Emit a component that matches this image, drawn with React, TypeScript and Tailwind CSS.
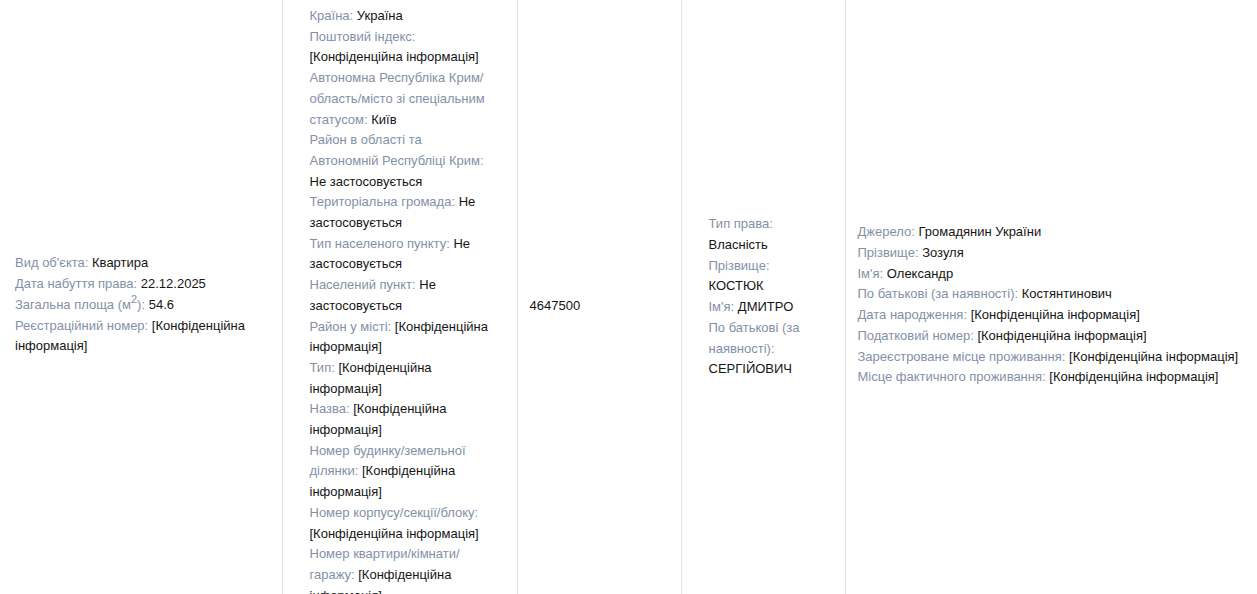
import React from 'react'

type Field = { label: React.ReactNode; value: string }

const objectFields: Field[] = [
  { label: "Вид об'єкта", value: 'Квартира' },
  { label: 'Дата набуття права', value: '22.12.2025' },
  {
    label: (
      <>
        Загальна площа (м<span className="relative -top-[6px] text-[11px] leading-none">2</span>)
      </>
    ),
    value: '54.6',
  },
  { label: 'Реєстраційний номер', value: '[Конфіденційна інформація]' },
]

const addressFields: Field[] = [
  { label: 'Країна', value: 'Україна' },
  { label: 'Поштовий індекс', value: '[Конфіденційна інформація]' },
  { label: 'Автономна Республіка Крим/ область/місто зі спеціальним статусом', value: 'Київ' },
  { label: 'Район в області та Автономній Республіці Крим', value: 'Не застосовується' },
  { label: 'Територіальна громада', value: 'Не застосовується' },
  { label: 'Тип населеного пункту', value: 'Не застосовується' },
  { label: 'Населений пункт', value: 'Не застосовується' },
  { label: 'Район у місті', value: '[Конфіденційна інформація]' },
  { label: 'Тип', value: '[Конфіденційна інформація]' },
  { label: 'Назва', value: '[Конфіденційна інформація]' },
  { label: 'Номер будинку/земельної ділянки', value: '[Конфіденційна інформація]' },
  { label: 'Номер корпусу/секції/блоку', value: '[Конфіденційна інформація]' },
  { label: 'Номер квартири/кімнати/ гаражу', value: '[Конфіденційна інформація]' },
]

const rightFields: Field[] = [
  { label: 'Тип права', value: 'Власність' },
  { label: 'Прізвище', value: 'КОСТЮК' },
  { label: "Ім'я", value: 'ДМИТРО' },
  { label: 'По батькові (за наявності)', value: 'СЕРГІЙОВИЧ' },
]

const personFields: Field[] = [
  { label: 'Джерело', value: 'Громадянин України' },
  { label: 'Прізвище', value: 'Зозуля' },
  { label: "Ім'я", value: 'Олександр' },
  { label: 'По батькові (за наявності)', value: 'Костянтинович' },
  { label: 'Дата народження', value: '[Конфіденційна інформація]' },
  { label: 'Податковий номер', value: '[Конфіденційна інформація]' },
  { label: 'Зареєстроване місце проживання', value: '[Конфіденційна інформація]' },
  { label: 'Місце фактичного проживання', value: '[Конфіденційна інформація]' },
]

function FieldList({ fields, className }: { fields: Field[]; className?: string }) {
  return (
    <div className={className}>
      {fields.map((f, i) => (
        <div key={i}>
          <span className="text-[#8390a7]">{f.label}:</span>{' '}
          <span className="text-[#151515]">{f.value}</span>
        </div>
      ))}
    </div>
  )
}

export default function App() {
  return (
    <div className="bg-white min-h-screen font-['Liberation_Sans',Arial,sans-serif] text-[13px] leading-[20.7px] text-[#151515]">
      <table className="w-full border-collapse table-fixed">
        <colgroup>
          <col className="w-[282px]" />
          <col className="w-[235px]" />
          <col className="w-[164px]" />
          <col className="w-[164px]" />
          <col />
        </colgroup>
        <tbody>
          <tr>
            <td className="align-middle pl-[15px] pr-3 pt-[6px] pb-[5px]">
              <FieldList fields={objectFields} className="-mt-[2px]" />
            </td>
            <td className="align-middle border-l border-[#e3e3e3] px-[27px] pt-[6px] pb-[5px]">
              <FieldList fields={addressFields} />
            </td>
            <td className="align-middle border-l border-[#e3e3e3] px-3 pt-[6px] pb-[5px]">4647500</td>
            <td className="align-middle border-l border-[#e3e3e3] px-[27px] pt-[6px] pb-[5px]">
              <FieldList fields={rightFields} className="mb-[18px]" />
            </td>
            <td className="align-middle border-l border-[#e3e3e3] pl-3 pr-2 pt-[6px] pb-[5px]">
              <FieldList fields={personFields} className="-mt-[2px]" />
            </td>
          </tr>
        </tbody>
      </table>
    </div>
  )
}
